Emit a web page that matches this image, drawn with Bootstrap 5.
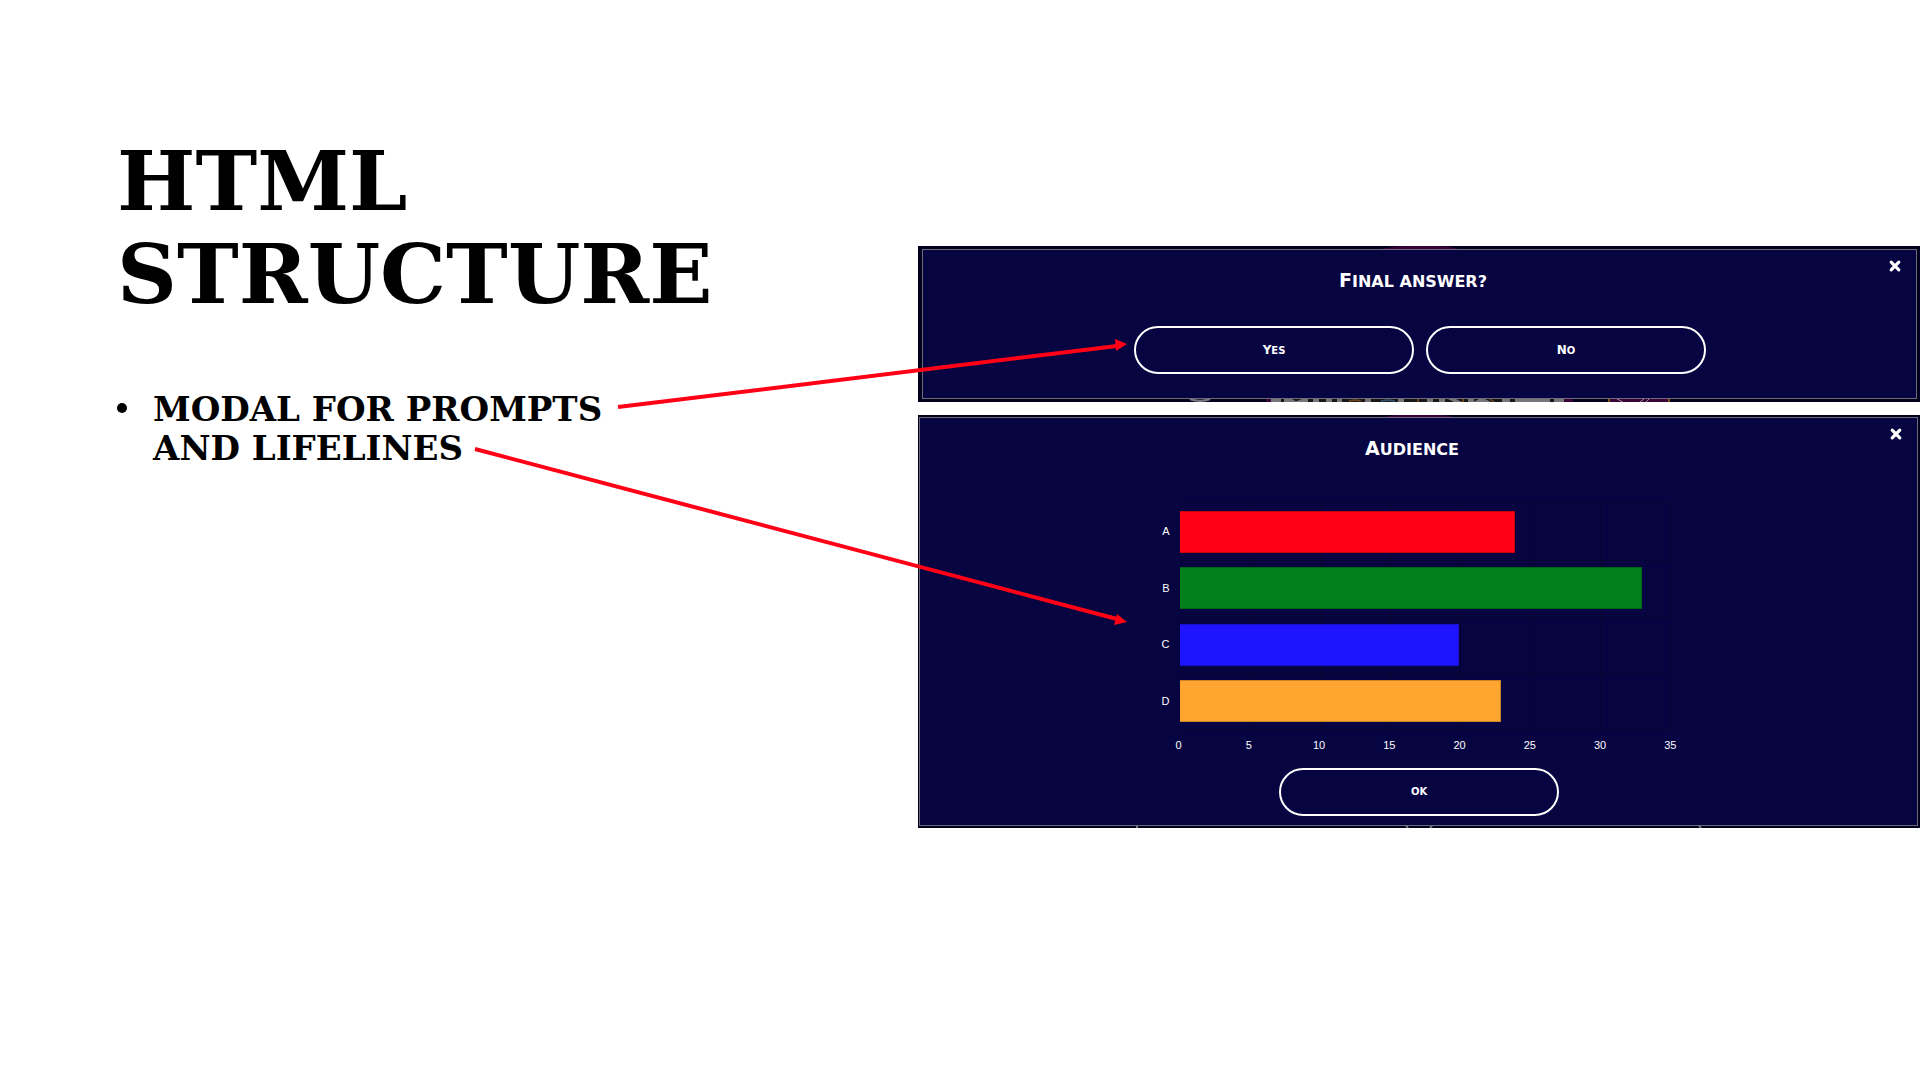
<!DOCTYPE html>
<html lang="en">
<head>
<meta charset="utf-8">
<meta name="viewport" content="width=device-width, initial-scale=1">
<title>HTML Structure</title>
<link href="https://cdn.jsdelivr.net/npm/bootstrap@5.3.0/dist/css/bootstrap.min.css" rel="stylesheet">
<style>
  :root { --navy: #060441; --grid: #040331; --plate: "Copperplate", "Copperplate Gothic Bold", "DejaVu Serif", serif; --plate-small: "Copperplate", "Copperplate Gothic Bold", "DejaVu Sans", sans-serif; }
  body { background: #fff; color: #000; font-family: var(--plate); }
  .slide { min-height: 100vh; }
  .slide-copy { width: 47.8125%; padding: 135px 48px 0 117px; }
  .slide-copy h1 { font-size: 83px; line-height: 93px; font-weight: 700; margin: 0 0 69px; }
  .points { font-size: 34px; line-height: 39px; font-weight: 700; }
  .points li { gap: 26px; }
  .points li::before { content: ""; flex: none; width: 10px; height: 10px; margin-top: 13px; border-radius: 50%; background: #000; }
  .slide-shots { flex: 1 1 0; min-width: 0; padding-top: 246px; gap: 13px; }
  .shot { background: #00001e; color: #fff; padding: 3px 3px 3px 4px; font-family: var(--plate-small); }
  .shot.tight { padding: 2px 2px 2px 1px; }
  .shot-trim { left: 0; width: 100%; height: 3px; display: block; }
  .dialog-box { background: var(--navy); border: 1px solid #6c6a76; padding: 9px 14px 24px 15px; }
  .tight .dialog-box { padding-bottom: 9px; }
  .dialog-title { font-size: 16px; line-height: 24px; min-height: 25px; font-weight: 700; margin: 9px 0 0; text-transform: uppercase; }
  .dialog-title::first-letter { font-size: 19px; line-height: 24px; }
  .close-x { width: 14px; height: 14px; line-height: 0; }
  .pill { width: 280px; height: 48px; padding: 0; border: 2px solid #fff; border-radius: 24px; background: transparent; color: #fff; font-family: inherit; font-size: 10px; line-height: 16px; font-weight: 700; text-transform: uppercase; }
  .pill.capital::first-letter { font-size: 12px; }
  .answers { gap: 12px; margin-top: 32px; }
  .chart { width: 551px; padding-right: 24px; margin: 41px auto 0; font-family: "Liberation Sans", Arial, sans-serif; font-size: 11px; line-height: 16px; }
  .chart-rows { height: 226px; }
  .chart-row { flex: 1 1 0; }
  .chart-key { width: 36px; padding-right: 10px; text-align: right; }
  .chart-track { width: 491px; border-top: 1px solid var(--grid); background: repeating-linear-gradient(to right, var(--grid) 0 1px, transparent 1px calc(100% / 7)); border-right: 1px solid var(--grid); }
  .chart-row:last-child .chart-track { border-bottom: 1px solid var(--grid); }
  .chart-bar { height: 42px; border: 1px solid rgba(0, 0, 0, .2); border-left-width: 0; }
  .bar-a { background: #ff0016; }
  .bar-b { background: #00801a; }
  .bar-c { background: #1f14ff; }
  .bar-d { background: #ffa530; }
  .chart-axis { margin: 8px -35px 0 0; }
  .chart-axis span { flex: 1 1 0; text-align: center; }
  .confirm { margin-top: 15px; }
  .arrows { inset: 0; width: 100%; pointer-events: none; }
</style>
</head>
<body>
<main class="slide position-relative d-flex">
  <section class="slide-copy">
    <h1>HTML<br>STRUCTURE</h1>
    <ul class="points list-unstyled mb-0">
      <li class="d-flex"><span>MODAL FOR PROMPTS<br>AND LIFELINES</span></li>
    </ul>
  </section>

  <section class="slide-shots d-flex flex-column">
    <div class="shot position-relative">
      <svg class="shot-trim position-absolute top-0" viewBox="0 0 1002 4" preserveAspectRatio="none" aria-hidden="true">
        <path d="M462 4Q480 0 490 0H520Q530 0 541 4Z" fill="#3a0038"/>
      </svg>
      <div class="dialog-box position-relative">
        <div class="d-flex align-items-start">
          <h2 class="dialog-title flex-grow-1 text-center">Final answer?</h2>
          <button class="close-x btn p-0 border-0" type="button" aria-label="Close">
            <svg width="14" height="14" viewBox="0 0 14 14"><path d="M3.2 3.2L10.8 10.8M10.8 3.2L3.2 10.8" stroke="#fff" stroke-width="3.2" stroke-linecap="round"/></svg>
          </button>
        </div>
        <div class="answers d-flex justify-content-center">
          <button class="pill capital" type="button">Yes</button>
          <button class="pill capital" type="button">No</button>
        </div>
      </div>
      <svg class="shot-trim position-absolute bottom-0" viewBox="0 0 1002 4" preserveAspectRatio="none" aria-hidden="true">
        <path d="M272 0Q282 5 292 0" fill="none" stroke="#77777f" stroke-width="3"/>
        <path d="M348 0H655V4H348Z" fill="#191419"/>
        <path d="M348 0H353V4H348ZM647 0H655V4H647Z" fill="#3a0038"/>
        <path d="M353 0H363V4H353ZM366 0H374L378 3L384 0H390V4H366ZM395 0H401V4H395ZM408 0H414V4H408ZM419 0H424V4H419ZM447 0H453V4H447ZM480 0H486V4H480ZM509 0H515V4H509ZM521 0H527V4H521ZM530 0H538L544 4H536ZM550 0H556V4H550ZM561 0H567L573 4H555ZM584 0H592V4H584ZM597 0H632V4H597ZM636 0H646V4H636Z" fill="#77747b"/>
        <path d="M431 3Q437 0 443 3M500 0V4M545 0V4M572 0L576 4" fill="none" stroke="#65431b" stroke-width="2"/>
        <path d="M463 3Q470 0 477 3" fill="none" stroke="#31506c" stroke-width="2"/>
        <path d="M690 0H752V4H690Z" fill="#3a0038"/>
        <path d="M691 0V4M751 0V4" stroke="#80551b" stroke-width="2"/>
        <path d="M699 0L705 4M722 4L726 0M728 4L731 0" stroke="#aaa0ae" stroke-width="1"/>
      </svg>
    </div>

    <div class="shot tight position-relative">
      <svg class="shot-trim position-absolute top-0" viewBox="0 0 1002 4" preserveAspectRatio="none" aria-hidden="true">
        <path d="M460 4Q474 0 484 0H520Q530 0 538 4Z" fill="#3a0038"/>
      </svg>
      <div class="dialog-box position-relative">
        <div class="d-flex align-items-start">
          <h2 class="dialog-title flex-grow-1 text-center">Audience</h2>
          <button class="close-x btn p-0 border-0" type="button" aria-label="Close">
            <svg width="14" height="14" viewBox="0 0 14 14"><path d="M3.2 3.2L10.8 10.8M10.8 3.2L3.2 10.8" stroke="#fff" stroke-width="3.2" stroke-linecap="round"/></svg>
          </button>
        </div>
        <div class="chart">
          <div class="chart-rows d-flex flex-column">
            <div class="chart-row d-flex"><span class="chart-key align-self-center">A</span><div class="chart-track d-flex align-items-center"><div class="chart-bar bar-a" style="width:68.57%"></div></div></div>
            <div class="chart-row d-flex"><span class="chart-key align-self-center">B</span><div class="chart-track d-flex align-items-center"><div class="chart-bar bar-b" style="width:94.29%"></div></div></div>
            <div class="chart-row d-flex"><span class="chart-key align-self-center">C</span><div class="chart-track d-flex align-items-center"><div class="chart-bar bar-c" style="width:57.14%"></div></div></div>
            <div class="chart-row d-flex"><span class="chart-key align-self-center">D</span><div class="chart-track d-flex align-items-center"><div class="chart-bar bar-d" style="width:65.71%"></div></div></div>
          </div>
          <div class="chart-axis d-flex">
            <span>0</span><span>5</span><span>10</span><span>15</span><span>20</span><span>25</span><span>30</span><span>35</span>
          </div>
        </div>
        <div class="confirm d-flex justify-content-center">
          <button class="pill" type="button">OK</button>
        </div>
      </div>
      <svg class="shot-trim position-absolute bottom-0" viewBox="0 0 1002 4" preserveAspectRatio="none" aria-hidden="true">
        <path d="M219 1V4M488 1L490 4M514 1L512 4M781 1L783 4" stroke="#77777f" stroke-width="2"/>
      </svg>
    </div>
  </section>

  <svg class="arrows position-absolute" viewBox="0 0 1920 1080" aria-hidden="true">
    <g fill="none" stroke="#ff0016" stroke-width="4">
      <path d="M618 407L1117 346"/>
      <path d="M475 449L1117 619"/>
    </g>
    <path d="M1127 344L1116 351L1115 339Z" fill="#ff0016"/>
    <path d="M1127 622L1114 625L1117 614Z" fill="#ff0016"/>
  </svg>
</main>
<script src="https://cdn.jsdelivr.net/npm/bootstrap@5.3.0/dist/js/bootstrap.bundle.min.js"></script>
</body>
</html>
